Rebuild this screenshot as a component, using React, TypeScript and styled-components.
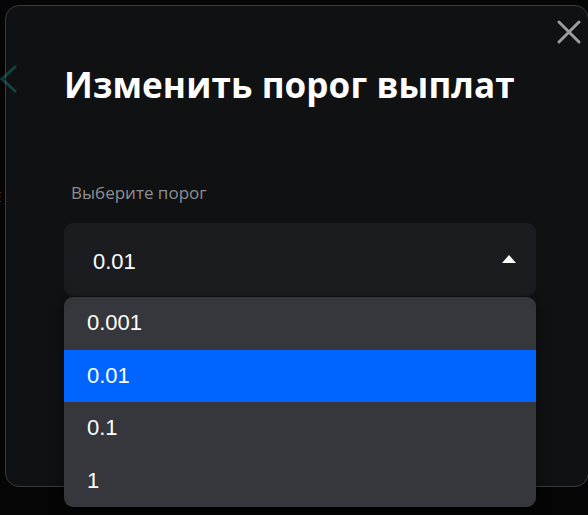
import React from "react";
import styled, { createGlobalStyle } from "styled-components";

const GlobalStyle = createGlobalStyle`
  html, body {
    margin: 0;
    padding: 0;
    background: #050506;
    overflow: hidden;
  }
  * { box-sizing: border-box; }
`;

const Page = styled.div`
  position: relative;
  width: 588px;
  height: 515px;
  padding: 5px 0 0 5px;
  overflow: hidden;
  font-family: "Open Sans", "Noto Sans", sans-serif;
`;

const BackIcon = styled.svg`
  position: absolute;
  left: -6px;
  top: 62px;
  opacity: 0.3;
`;

const BackText = styled.span`
  position: absolute;
  left: -7px;
  top: 186px;
  color: #6d6d70;
  font-size: 15px;
`;

const Modal = styled.div`
  position: relative;
  width: 584px;
  height: 482px;
  background: rgba(17, 18, 20, 0.94);
  border: 1px solid #3a3b3f;
  border-radius: 14px;
  padding: 55px 0 0 58px;
  display: flex;
  flex-direction: column;
`;

const CloseButton = styled.button`
  position: absolute;
  top: 10px;
  right: 3px;
  width: 32px;
  height: 32px;
  padding: 0;
  border: none;
  background: transparent;
  display: flex;
  align-items: center;
  justify-content: center;
`;

const Title = styled.h2`
  margin: 0;
  color: #ffffff;
  font-weight: 700;
  font-size: 35px;
  line-height: 48px;
  letter-spacing: 0.1px;
`;

const Label = styled.div`
  margin: 72px 0 0 7px;
  color: #8e8e92;
  font-size: 17px;
  line-height: 24px;
`;

const SelectWrap = styled.div`
  position: relative;
  width: 472px;
  margin-top: 18px;
`;

const SelectBox = styled.div`
  height: 73px;
  border-radius: 9px;
  background: #1b1c1f;
  display: flex;
  align-items: center;
  justify-content: space-between;
  padding: 0 20px 0 29px;
  color: #ffffff;
  font-family: "Liberation Sans", Arial, sans-serif;
  font-size: 22px;
`;

const Value = styled.span`
  padding-top: 5px;
`;

const Caret = styled.span`
  width: 0;
  height: 0;
  border-left: 7px solid transparent;
  border-right: 7px solid transparent;
  border-bottom: 8px solid #ffffff;
  margin-top: -2px;
`;

const Menu = styled.ul`
  position: absolute;
  left: 0;
  top: 74px;
  width: 472px;
  margin: 0;
  padding: 0;
  list-style: none;
  background: #36373c;
  border-radius: 9px;
  overflow: hidden;
  box-shadow: 0 4px 14px rgba(0, 0, 0, 0.5);
`;

const Option = styled.li<{ $active?: boolean }>`
  height: 52.5px;
  display: flex;
  align-items: center;
  padding-left: 23px;
  color: #ffffff;
  font-family: "Liberation Sans", Arial, sans-serif;
  font-size: 22px;
  background: ${(p) => (p.$active ? "#0064ff" : "transparent")};
`;

const options = ["0.001", "0.01", "0.1", "1"];

export default function App() {
  const value = "0.01";
  return (
    <>
      <GlobalStyle />
      <Page>
        <Modal>
          <CloseButton aria-label="Закрыть">
            <svg width="24" height="24" viewBox="0 0 24 24">
              <path
                d="M2 2 L22 22 M22 2 L2 22"
                stroke="#9d9da0"
                strokeWidth="3"
                strokeLinecap="round"
              />
            </svg>
          </CloseButton>
          <Title>Изменить порог выплат</Title>
          <Label>Выберите порог</Label>
          <SelectWrap>
            <SelectBox>
              <Value>{value}</Value>
              <Caret />
            </SelectBox>
            <Menu>
              {options.map((o) => (
                <Option key={o} $active={o === value}>
                  {o}
                </Option>
              ))}
            </Menu>
          </SelectWrap>
        </Modal>
        <BackIcon width="26" height="34" viewBox="0 0 26 34">
          <path
            d="M22 4 L8 17 L22 30"
            fill="none"
            stroke="#19b3b0"
            strokeWidth="3"
          />
        </BackIcon>
        <BackText>Е</BackText>
      </Page>
    </>
  );
}
